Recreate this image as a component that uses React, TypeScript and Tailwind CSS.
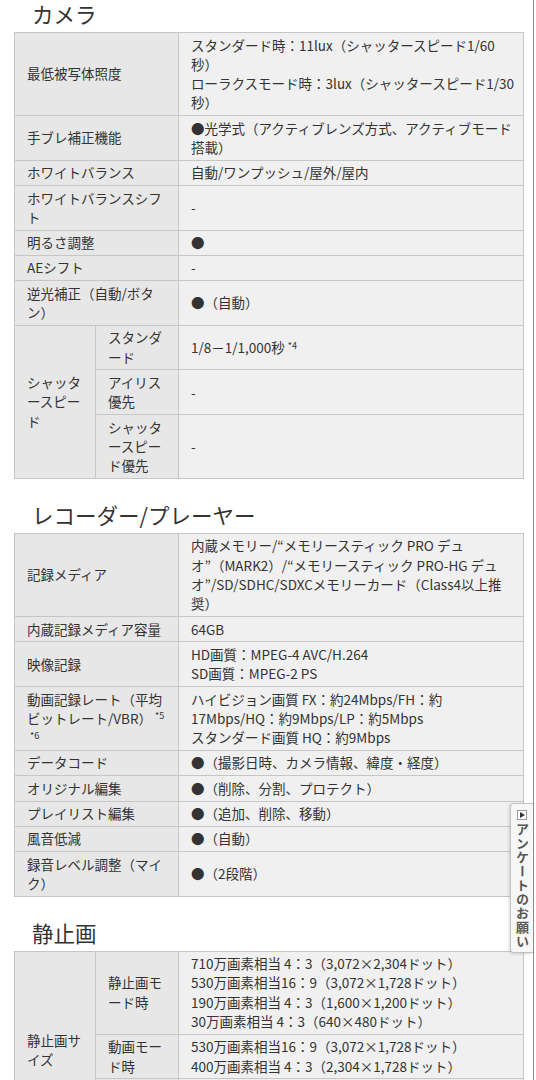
import type { ReactNode } from 'react';

type Simple = { label: ReactNode; value: ReactNode };
type Group = { group: string; subs: Simple[] };
type Row = Simple | Group;

const Dot = () => <span>●</span>;

const Note = ({ n }: { n: string }) => (
  <sup className="ml-[3px] text-[9px] leading-none">*{n}</sup>
);

const camera: Row[] = [
  {
    label: '最低被写体照度',
    value: (
      <>
        スタンダード時：11lux（シャッタースピード1/60秒）
        <br />
        ローラクスモード時：3lux（シャッタースピード1/30秒）
      </>
    ),
  },
  { label: '手ブレ補正機能', value: <><Dot />光学式（アクティブレンズ方式、アクティブモード搭載）</> },
  { label: 'ホワイトバランス', value: '自動/ワンプッシュ/屋外/屋内' },
  { label: 'ホワイトバランスシフト', value: '-' },
  { label: '明るさ調整', value: <Dot /> },
  { label: 'AEシフト', value: '-' },
  { label: '逆光補正（自動/ボタン）', value: <><Dot />（自動）</> },
  {
    group: 'シャッタースピード',
    subs: [
      { label: 'スタンダード', value: <>1/8－1/1,000秒<Note n="4" /></> },
      { label: 'アイリス優先', value: '-' },
      { label: 'シャッタースピード優先', value: '-' },
    ],
  },
];

const recorder: Row[] = [
  {
    label: '記録メディア',
    value: '内蔵メモリー/“メモリースティック PRO デュオ”（MARK2）/“メモリースティック PRO-HG デュオ”/SD/SDHC/SDXCメモリーカード（Class4以上推奨）',
  },
  { label: '内蔵記録メディア容量', value: '64GB' },
  {
    label: '映像記録',
    value: (
      <>
        HD画質：MPEG-4 AVC/H.264
        <br />
        SD画質：MPEG-2 PS
      </>
    ),
  },
  {
    label: <>動画記録レート（平均ビットレート/VBR）<Note n="5" /> <Note n="6" /></>,
    value: (
      <>
        ハイビジョン画質 FX：約24Mbps/FH：約17Mbps/HQ：約9Mbps/LP：約5Mbps
        <br />
        スタンダード画質 HQ：約9Mbps
      </>
    ),
  },
  { label: 'データコード', value: <><Dot />（撮影日時、カメラ情報、緯度・経度）</> },
  { label: 'オリジナル編集', value: <><Dot />（削除、分割、プロテクト）</> },
  { label: 'プレイリスト編集', value: <><Dot />（追加、削除、移動）</> },
  { label: '風音低減', value: <><Dot />（自動）</> },
  { label: '録音レベル調整（マイク）', value: <><Dot />（2段階）</> },
];

const still: Row[] = [
  {
    group: '静止画サイズ',
    subs: [
      {
        label: '静止画モード時',
        value: (
          <>
            710万画素相当 4：3（3,072×2,304ドット）
            <br />
            530万画素相当16：9（3,072×1,728ドット）
            <br />
            190万画素相当 4：3（1,600×1,200ドット）
            <br />
            30万画素相当 4：3（640×480ドット）
          </>
        ),
      },
      {
        label: '動画モード時',
        value: (
          <>
            530万画素相当16：9（3,072×1,728ドット）
            <br />
            400万画素相当 4：3（2,304×1,728ドット）
          </>
        ),
      },
      {
        label: 'デュアル記録時',
        value: (
          <>
            530万画素相当16：9（3,072×1,728ドット）
            <br />
            400万画素相当 4：3（2,304×1,728ドット）
          </>
        ),
      },
      { label: '連写', value: '-' },
    ],
  },
];

const th = 'border border-[#c6c6c6] bg-[#e7e7e7] px-3 py-[2.5px] text-left align-middle font-normal';
const td = 'border border-[#c6c6c6] bg-[#f0f0f0] pl-3 pr-[6px] py-[2.5px] align-middle';

function SpecTable({ rows }: { rows: Row[] }) {
  return (
    <table className="w-[510px] table-fixed border-collapse text-[13.5px] leading-[19.3px] text-[#333]">
      <colgroup>
        <col className="w-[81px]" />
        <col className="w-[83px]" />
        <col />
      </colgroup>
      <tbody>
        {rows.flatMap((row, i) => {
          if ('group' in row) {
            return row.subs.map((sub, j) => (
              <tr key={`${i}-${j}`}>
                {j === 0 && (
                  <th rowSpan={row.subs.length} className={th}>
                    {row.group}
                  </th>
                )}
                <th className={th}>{sub.label}</th>
                <td className={td}>{sub.value}</td>
              </tr>
            ));
          }
          return [
            <tr key={i}>
              <th colSpan={2} className={th}>
                {row.label}
              </th>
              <td className={td}>{row.value}</td>
            </tr>,
          ];
        })}
      </tbody>
    </table>
  );
}

function Section({ title, rows, first }: { title: string; rows: Row[]; first?: boolean }) {
  return (
    <section className={first ? '' : 'mt-[22px]'}>
      <h2 className="mb-[4px] pl-[18px] text-[21.5px] leading-[28px] font-normal text-[#333]">{title}</h2>
      <SpecTable rows={rows} />
    </section>
  );
}

export default function App() {
  return (
    <div
      className="relative h-[1080px] w-[536px] overflow-hidden bg-white"
      style={{ fontFamily: '"Noto Sans CJK JP", "Noto Sans", sans-serif' }}
    >
      <div className="h-full w-[534px] border-r border-[#8f8f8f] pl-[14px]">
        <Section title="カメラ" rows={camera} first />
        <Section title="レコーダー/プレーヤー" rows={recorder} />
        <Section title="静止画" rows={still} />
      </div>

      <div className="absolute right-[3px] top-[803px] flex h-[150px] w-[23px] flex-col items-center rounded-l-[4px] border border-r-0 border-[#c2c2c2] bg-[#f7f7f7] pt-[6px] shadow-[-1px_1px_3px_rgba(0,0,0,0.15)]">
        <span className="flex h-[10px] w-[10px] items-center justify-center border border-[#9a9a9a] bg-white">
          <svg width="5" height="6" viewBox="0 0 5 6">
            <path d="M0 0 L5 3 L0 6 Z" fill="#333" />
          </svg>
        </span>
        <span className="mt-[3px] text-[13px] leading-[16px] font-bold tracking-[1px] text-[#555] [writing-mode:vertical-rl]">
          アンケートのお願い
        </span>
      </div>
    </div>
  );
}
